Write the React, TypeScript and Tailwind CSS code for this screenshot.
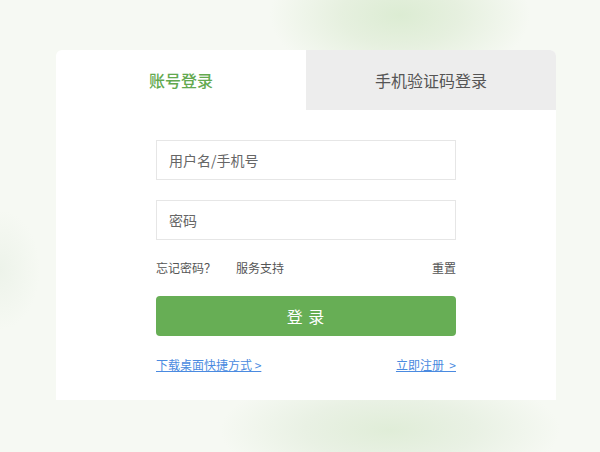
export default function App() {
  return (
    <div
      className="w-[600px] h-[452px] overflow-hidden pt-[50px] pl-[56px] bg-[#f6f9f3] bg-[radial-gradient(ellipse_130px_70px_at_400px_15px,#dcecd3_0%,#e6f0df_45%,rgba(230,240,223,0)_100%),radial-gradient(ellipse_170px_60px_at_390px_430px,#e0edd8_0%,#e9f1e4_50%,rgba(233,241,228,0)_100%),radial-gradient(ellipse_40px_60px_at_0px_270px,#edf3ea_0%,rgba(237,243,234,0)_100%)]"
      style={{ fontFamily: '"Noto Sans CJK SC", "Noto Sans", sans-serif' }}
    >
      <div className="w-[500px] h-[350px] bg-white rounded-t-[6px] flex flex-col">
        <div className="flex h-[60px]">
          <div className="w-[250px] flex items-center justify-center text-[16px] font-medium text-[#63a94f]">
            账号登录
          </div>
          <div className="w-[250px] flex items-center justify-center text-[16px] text-[#555] bg-[#ededed] rounded-tr-[6px]">
            手机验证码登录
          </div>
        </div>
        <div className="flex flex-col w-[300px] ml-[100px] mt-[30px]">
          <div className="h-[40px] border border-[#e6e6e6] flex items-center pl-[12px] text-[14px] text-[#666]">
            用户名/手机号
          </div>
          <div className="h-[40px] border border-[#e6e6e6] flex items-center pl-[12px] text-[14px] text-[#666] mt-[20px]">
            密码
          </div>
          <div className="flex items-center justify-between mt-[20px] h-[16px] text-[12px] text-[#555]">
            <div className="flex gap-[20px]">
              <span>忘记密码？</span>
              <span>服务支持</span>
            </div>
            <span>重置</span>
          </div>
          <div className="h-[40px] mt-[20px] rounded-[4px] bg-[#67ae55] flex items-center justify-center text-white text-[16px] tracking-[1px]">
            登 录
          </div>
          <div className="flex justify-between mt-[20px] text-[12px] text-[#4a8ae0] underline">
            <span>下载桌面快捷方式 &gt;</span>
            <span>立即注册 &nbsp;&gt;</span>
          </div>
        </div>
      </div>
    </div>
  );
}
